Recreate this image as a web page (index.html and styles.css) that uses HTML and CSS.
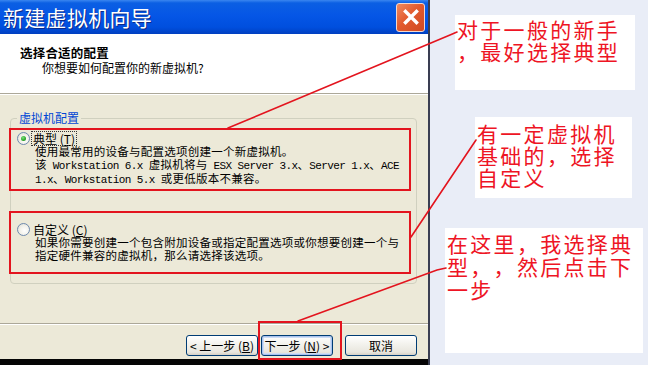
FILE: index.html
```html
<!DOCTYPE html>
<html lang="zh-CN">
<head>
<meta charset="utf-8">
<title>新建虚拟机向导</title>
<link rel="stylesheet" href="styles.css">
</head>
<body>
<div class="page">
  <section class="dialog">
    <header class="titlebar">
      <h1 class="title">新建虚拟机向导</h1>
      <button class="close" aria-label="关闭">
        <svg viewBox="0 0 20 20" width="20" height="20"><path d="M4.5 4.5 L15.5 15.5 M15.5 4.5 L4.5 15.5" stroke="#fff" stroke-width="3.4" stroke-linecap="square"/></svg>
      </button>
    </header>
    <div class="head">
      <div class="head-title">选择合适的配置</div>
      <div class="head-sub">你想要如何配置你的新虚拟机?</div>
    </div>
    <div class="body">
      <div class="group">
        <div class="group-title">虚拟机配置</div>
        <div class="option opt1">
          <div class="opt-row"><span class="radio checked"></span><span class="opt-label focus">典型 (<u>T</u>)</span></div>
          <div class="desc">使用最常用的设备与配置选项创建一个新虚拟机。</div>
          <div class="desc">该<span class="en"> Workstation 6.x </span>虚拟机将与<span class="en"> ESX Server 3.x</span>、<span class="en">Server 1.x</span>、<span class="en">ACE</span></div>
          <div class="desc"><span class="en">1.x</span>、<span class="en">Workstation 5.x </span>或更低版本不兼容。</div>
        </div>
        <div class="option opt2">
          <div class="opt-row"><span class="radio"></span><span class="opt-label">自定义 (<u>C</u>)</span></div>
          <div class="desc">如果你需要创建一个包含附加设备或指定配置选项或你想要创建一个与</div>
          <div class="desc">指定硬件兼容的虚拟机，那么请选择该选项。</div>
        </div>
      </div>
    </div>
    <div class="sep"></div>
    <div class="buttons">
      <button class="btn">&lt; 上一步 (<u>B</u>)</button>
      <button class="btn default">下一步 (<u>N</u>) &gt;</button>
      <button class="btn cancel">取消</button>
    </div>
    <div class="bottom-strip"></div>
    <div class="mark-next"></div>
  </section>
  <aside class="notes">
    <div class="note note1">对于一般的新手<br>，最好选择典型</div>
    <div class="note note2">有一定虚拟机<br>基础的，选择<br>自定义</div>
    <div class="note note3">在这里，我选择典<br>型，，然后点击下<br>一步</div>
  </aside>
  <svg class="arrows" width="648" height="365" viewBox="0 0 648 365">
    <g stroke="#E3141E" stroke-width="1.6" fill="none" stroke-linecap="round">
      <path d="M228 128 L450 35 L457 32"/>
      <path d="M411 237 L476 140"/>
      <path d="M298 321 L437 270 L446 268"/>
    </g>
  </svg>
</div>
</body>
</html>
```

FILE: styles.css
```css
* { box-sizing: border-box; }
html, body { margin: 0; padding: 0; }
body {
  width: 648px;
  height: 365px;
  overflow: hidden;
  background: #E9EDF7;
  font-family: "Noto Sans CJK SC", "Liberation Sans", sans-serif;
}
.page {
  position: relative;
  display: flex;
  width: 648px;
  height: 365px;
}
.dialog {
  position: relative;
  width: 430px;
  height: 365px;
  display: flex;
  flex-direction: column;
  background: #ECE9D8;
  border-right: 2px solid #3A3E52;
  flex: none;
}
.titlebar {
  height: 34px;
  flex: none;
  display: flex;
  align-items: center;
  justify-content: space-between;
  padding: 0 3px 0 3px;
  background: linear-gradient(to bottom, #3A86F0 0, #0B5FE3 3px, #0556E6 45%, #004FDE 80%, #003FC0 100%);
}
.title {
  margin: 0;
  font-size: 21px;
  line-height: 26px;
  font-weight: 400;
  color: #fff;
  text-shadow: 1px 1px 0 #0A2A8A;
  letter-spacing: 0.3px;
}
.close {
  width: 29px;
  height: 29px;
  padding: 0;
  margin: 0;
  border: 1px solid #F3D8CE;
  border-radius: 3px;
  background: linear-gradient(135deg, #F08A60 0, #E25A2E 45%, #D14A22 100%);
  display: flex;
  align-items: center;
  justify-content: center;
}
.close svg { display: block; }
.head {
  height: 60px;
  flex: none;
  background: #fff;
  border-bottom: 1px solid #ACA899;
  box-shadow: 0 1px 0 #fff;
  padding: 12px 0 0 20px;
  color: #000;
}
.head-title {
  font-size: 12.5px;
  line-height: 14px;
  font-weight: 700;
  letter-spacing: 0.2px;
}
.head-sub {
  font-size: 12px;
  line-height: 14px;
  padding-left: 22px;
  margin-top: 1px;
}
.body {
  height: 228px;
  flex: none;
  margin-top: 1px;
  padding: 23px 11px 0 10px;
}
.group {
  border: 1px solid #D0D0BF;
  border-radius: 4px;
  padding: 0 0 9px 0;
}
.group-title {
  width: fit-content;
  margin: -8px 0 0 6px;
  padding: 0 2px;
  background: #ECE9D8;
  color: #0046D5;
  font-size: 12px;
  line-height: 14px;
}
.option {
  width: 402px;
  height: 63px;
  margin-left: -2px;
  border: 2px solid #E3141E;
  padding: 2px 0 0 6px;
  font-size: 12px;
  color: #000;
}
.opt1 { margin-top: 3px; }
.opt2 { margin-top: 20px; padding-top: 10px; }
.opt-row {
  display: flex;
  align-items: center;
  height: 13px;
  gap: 2px;
}
.radio {
  width: 13px;
  height: 13px;
  border-radius: 50%;
  border: 1px solid #6E89AE;
  background: radial-gradient(circle at 60% 60%, #FFFFFF 0, #F2F1EA 50%, #D8D7CE 100%);
  display: flex;
  align-items: center;
  justify-content: center;
  flex: none;
}
.radio.checked::after {
  content: "";
  width: 5px;
  height: 5px;
  border-radius: 50%;
  background: radial-gradient(circle at 40% 35%, #7FE07F 0, #29A529 60%, #1C7F1C 100%);
}
.opt-label {
  font-size: 12px;
  line-height: 13px;
  padding: 0 1px;
}
.opt-label.focus { outline: 1px dotted #333; }
.desc {
  margin-left: 18px;
  font-size: 11.5px;
  line-height: 12.5px;
  letter-spacing: 0.25px;
  white-space: nowrap;
}
.en {
  font-family: "Liberation Mono", monospace;
  font-size: 11px;
  letter-spacing: -0.6px;
}
.sep {
  height: 2px;
  flex: none;
  border-top: 1px solid #ACA899;
  border-bottom: 1px solid #fff;
}
.buttons {
  flex: none;
  display: flex;
  justify-content: flex-end;
  padding: 10px 11px 0 0;
  height: 34px;
}
.btn {
  width: 72px;
  height: 21px;
  margin: 0;
  padding: 0;
  border: 1px solid #003C74;
  border-radius: 3px;
  background: linear-gradient(to bottom, #FFFFFF 0, #F4F3EE 40%, #E8E6DE 85%, #D6D0C5 100%);
  font-family: "Noto Sans CJK SC", sans-serif;
  font-size: 12px;
  line-height: 19px;
  color: #000;
}
.btn.default {
  margin-left: 3px;
  box-shadow: inset 0 0 0 1px #A9C3EE, inset 0 0 0 2px #CEDCF3;
}
.btn.cancel { margin-left: 12px; }
.bottom-strip {
  flex: none;
  height: 7px;
  background: #050505;
  margin-top: auto;
}
.mark-next {
  position: absolute;
  left: 258px;
  top: 321px;
  width: 84px;
  height: 39px;
  border: 2px solid #E3141E;
}
.notes {
  width: 218px;
  flex: none;
  padding-top: 15px;
  display: flex;
  flex-direction: column;
  align-items: flex-start;
}
.note {
  background: #fff;
  color: #EE1424;
  font-size: 21px;
  letter-spacing: 2.3px;
  line-height: 22px;
  padding: 3px 0 0 2px;
  white-space: nowrap;
  text-spacing-trim: space-all;
}
.note1 { margin-left: 25px; width: 180px; height: 75px; }
.note2 { margin-left: 45px; width: 157px; height: 81px; margin-top: 27px; padding-top: 5px; }
.note3 { margin-left: 15px; width: 198px; height: 125px; margin-top: 30px; padding-top: 4px; line-height: 23px; }
.arrows {
  position: absolute;
  left: 0;
  top: 0;
  pointer-events: none;
}
```
